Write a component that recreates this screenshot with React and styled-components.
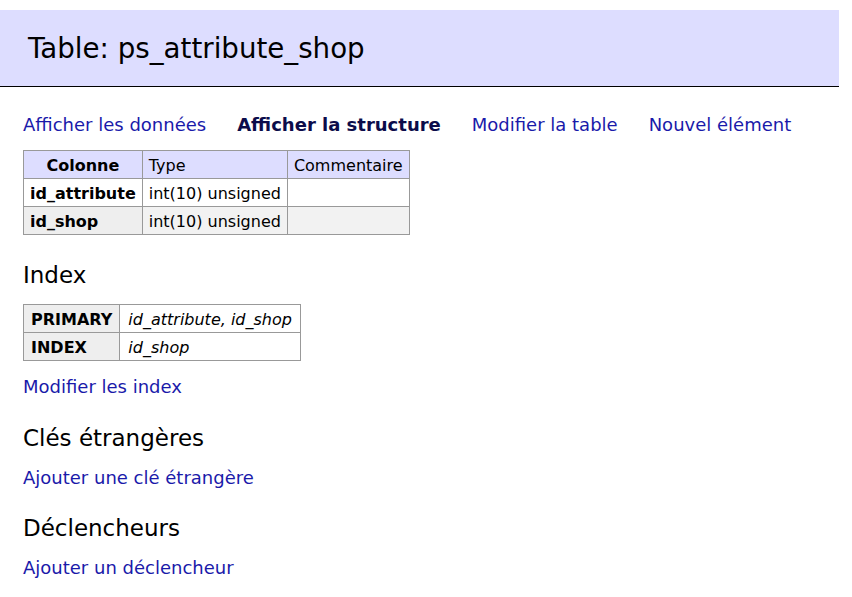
import React from "react";
import styled, { createGlobalStyle } from "styled-components";

const Global = createGlobalStyle`
  html, body { margin: 0; padding: 0; background: #fff; }
  body { font-family: "DejaVu Sans", Verdana, sans-serif; color: #000; }
`;

const Page = styled.div`
  padding-top: 10px;
  width: 852px;
`;

const Header = styled.h2`
  margin: 0;
  width: 839px;
  box-sizing: border-box;
  height: 77px;
  padding: 0 0 0 28px;
  display: flex;
  align-items: center;
  background: #ddf;
  border-bottom: 1px solid #000;
  font-size: 27.7px;
  font-weight: normal;
  color: #000;
`;

const Content = styled.div`
  padding: 0 0 0 23px;
`;

const Links = styled.nav`
  display: flex;
  gap: 31px;
  margin-top: 27px;
  font-size: 18px;
  line-height: 22px;
`;

const Link = styled.a`
  color: ${(p) => (p.$active ? "#0c0c4a" : "#1a1aaa")};
  font-weight: ${(p) => (p.$active ? "bold" : "normal")};
  text-decoration: none;
  cursor: pointer;
`;

const Table = styled.table`
  border-collapse: collapse;
  margin-top: ${(p) => p.$mt || 0}px;
  font-size: 16px;
  line-height: 20px;
`;

const Th = styled.th`
  border: 1px solid #999;
  height: 28px;
  box-sizing: border-box;
  padding: 2px ${(p) => p.$pad || 6}px 0;
  text-align: ${(p) => (p.$center ? "center" : "left")};
  font-weight: ${(p) => (p.$plain ? "normal" : "bold")};
  background: ${(p) => p.$bg || "#eee"};
  white-space: nowrap;
`;

const Td = styled.td`
  border: 1px solid #999;
  height: 28px;
  box-sizing: border-box;
  padding: 2px ${(p) => p.$pad || 6}px 0;
  font-style: ${(p) => (p.$italic ? "italic" : "normal")};
  white-space: nowrap;
`;

const Row = styled.tr`
  background: ${(p) => (p.$odd ? "#f2f2f2" : "#fff")};
`;

const H3 = styled.h3`
  margin: ${(p) => p.$mt}px 0 0;
  font-size: 23px;
  font-weight: normal;
  line-height: 28px;
`;

const P = styled.p`
  margin: ${(p) => p.$mt}px 0 0;
  font-size: 18px;
  line-height: 22px;
`;

export default function App() {
  return (
    <>
      <Global />
      <Page>
        <Header>Table: ps_attribute_shop</Header>
        <Content>
          <Links>
            <Link>Afficher les données</Link>
            <Link $active>Afficher la structure</Link>
            <Link>Modifier la table</Link>
            <Link>Nouvel élément</Link>
          </Links>
          <Table $mt={14}>
            <thead>
              <tr>
                <Th $center $bg="#ddf">Colonne</Th>
                <Th $plain $bg="#ddf">Type</Th>
                <Th $plain $bg="#ddf">Commentaire</Th>
              </tr>
            </thead>
            <tbody>
              <Row>
                <Th $bg="#fff">id_attribute</Th>
                <Td>int(10) unsigned</Td>
                <Td></Td>
              </Row>
              <Row $odd>
                <Th $bg="#eee">id_shop</Th>
                <Td>int(10) unsigned</Td>
                <Td></Td>
              </Row>
            </tbody>
          </Table>
          <H3 $mt={26}>Index</H3>
          <Table $mt={15}>
            <tbody>
              <tr>
                <Th $pad={7}>PRIMARY</Th>
                <Td $pad={8} $italic>id_attribute, id_shop</Td>
              </tr>
              <tr>
                <Th $pad={7}>INDEX</Th>
                <Td $pad={8} $italic>id_shop</Td>
              </tr>
            </tbody>
          </Table>
          <P $mt={15}>
            <Link>Modifier les index</Link>
          </P>
          <H3 $mt={26}>Clés étrangères</H3>
          <P $mt={15}>
            <Link>Ajouter une clé étrangère</Link>
          </P>
          <H3 $mt={25}>Déclencheurs</H3>
          <P $mt={15}>
            <Link>Ajouter un déclencheur</Link>
          </P>
        </Content>
      </Page>
    </>
  );
}
